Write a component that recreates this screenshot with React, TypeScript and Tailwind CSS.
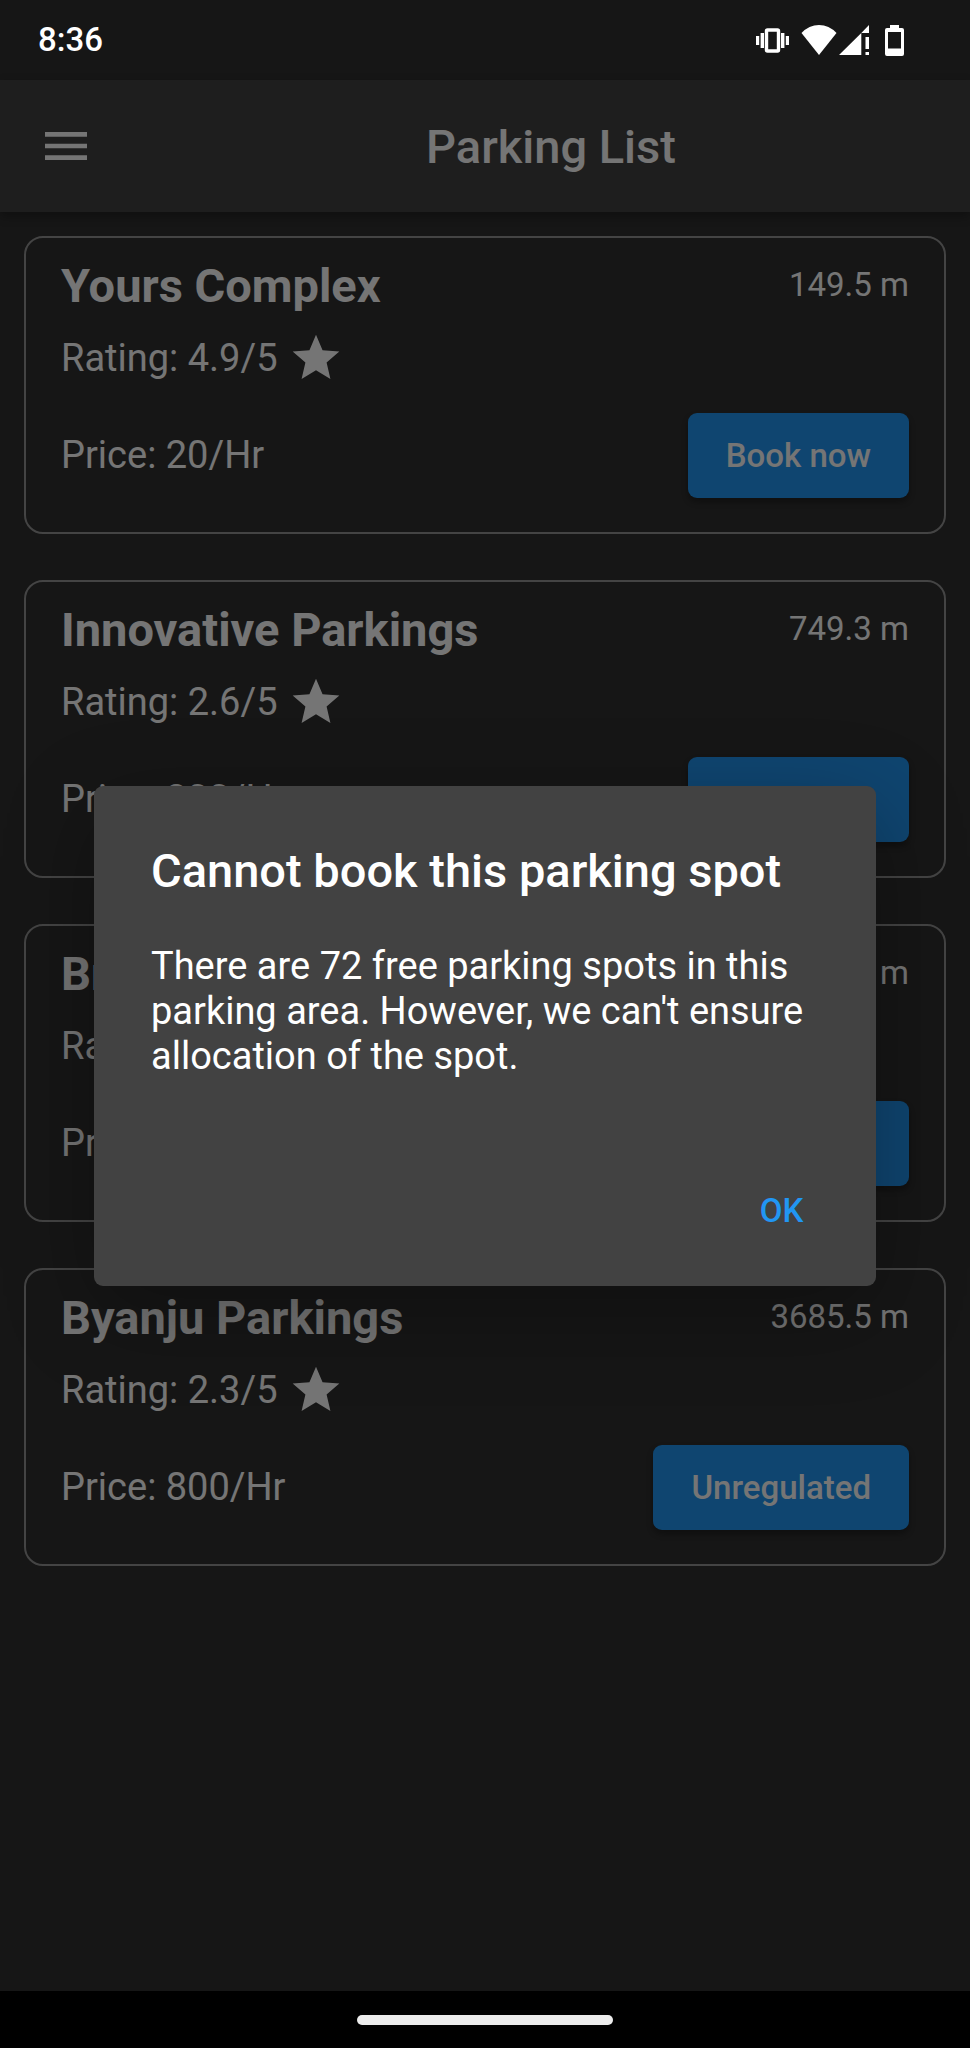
import { useState } from "react";

interface Parking {
    name: string
    distance: string
    rating: string
    price: string
    action: string
}

const parkings: Parking[] = [
    { name: "Yours Complex", distance: "149.5 m", rating: "4.9/5", price: "20/Hr", action: "Book now" },
    { name: "Innovative Parkings", distance: "749.3 m", rating: "2.6/5", price: "200/Hr", action: "Book now" },
    { name: "Britain Parkings", distance: "970.1 m", rating: "3.4/5", price: "100/Hr", action: "Book now" },
    { name: "Byanju Parkings", distance: "3685.5 m", rating: "2.3/5", price: "800/Hr", action: "Unregulated" },
];

function VibrateIcon() {
    return (
        <svg width="33" height="25" viewBox="0 0 33 25" fill="currentColor" aria-hidden="true">
            <rect x="0" y="8" width="3.2" height="9" />
            <rect x="4.6" y="5" width="3.4" height="15" />
            <rect x="10.5" y="2" width="12" height="21" rx="1" fill="none" stroke="currentColor" strokeWidth="3.4" />
            <rect x="25" y="5" width="3.4" height="15" />
            <rect x="29.8" y="8" width="3.2" height="9" />
        </svg>
    )
}

function WifiIcon() {
    return (
        <svg width="36" height="30" viewBox="0 0 36 30" fill="currentColor" aria-hidden="true">
            <path d="M18 30L0.5 8Q8 0 18 0T35.5 8Z" />
        </svg>
    )
}

function SignalIcon() {
    return (
        <svg width="30" height="30" viewBox="0 0 30 30" fill="currentColor" aria-hidden="true">
            <path d="M0 30L22.3 8V30ZM22.3 8L30 0V8Z" />
            <rect x="26.5" y="12" width="3.5" height="12" />
            <rect x="26.5" y="27" width="3.5" height="3" />
        </svg>
    )
}

function BatteryIcon() {
    return (
        <svg width="19" height="31" viewBox="0 0 19 31" fill="currentColor" aria-hidden="true">
            <path fillRule="evenodd" d="M5 0H14V3H17Q19 3 19 5V29Q19 31 17 31H2Q0 31 0 29V5Q0 3 2 3H5ZM3 7V23.5H16V7Z" />
        </svg>
    )
}

function MenuIcon() {
    return (
        <svg className="size-14" viewBox="0 0 24 24" fill="currentColor" aria-hidden="true">
            <path d="M3 18h18v-2H3v2zm0-5h18v-2H3v2zm0-7v2h18V6H3z" />
        </svg>
    )
}

function StarIcon() {
    return (
        <svg className="size-14" viewBox="0 0 24 24" fill="currentColor" aria-hidden="true">
            <path d="M12 17.27L18.18 21l-1.64-7.03L22 9.24l-7.19-.61L12 2 9.19 8.63 2 9.24l5.46 4.73L5.82 21z" />
        </svg>
    )
}

function StatusBar() {
    return (
        <div className="flex h-20 items-center justify-between bg-[#161616] pl-[38px] pr-[66px]">
            <span className="text-[33px] leading-10 font-medium">8:36</span>
            <div className="flex items-center">
                <VibrateIcon />
                <div className="ml-3 flex items-center gap-0.5">
                    <WifiIcon />
                    <SignalIcon />
                </div>
                <div className="ml-4">
                    <BatteryIcon />
                </div>
            </div>
        </div>
    )
}

function ParkingCard({ parking, onBook }: { parking: Parking, onBook: () => void }) {
    return (
        <li className="rounded-[19px] border-2 border-[#949494] px-[35px] pt-5 pb-[34px]">
            <div className="flex items-start justify-between">
                <h2 className="text-[47px] leading-14 font-bold">{parking.name}</h2>
                <span className="text-[33px] leading-[54px]">{parking.distance}</span>
            </div>
            <div className="mt-4 flex items-center gap-2.5 text-[38px] leading-[45px]">
                <span>Rating: {parking.rating}</span>
                <StarIcon />
            </div>
            <div className="mt-[27px] flex items-center justify-between text-[38px] leading-[45px]">
                <span>Price: {parking.price}</span>
                <button
                    onClick={onBook}
                    className="h-[85px] rounded-[9px] bg-[#2196f3] px-[38px] text-[33px] font-medium shadow-[0_4px_6px_rgba(0,0,0,0.3)]"
                >
                    {parking.action}
                </button>
            </div>
        </li>
    )
}

export default function App() {
    const [isOpen, setIsOpen] = useState(true);

    return (
        <div className="flex min-h-screen flex-col bg-[#303030] font-['Roboto',sans-serif] text-white">
            <StatusBar />

            <div className="relative flex flex-1 flex-col">
                <header className="flex h-[132px] items-center bg-[#424242] shadow-[0_4px_10px_rgba(0,0,0,0.3)]">
                    <button className="flex w-[132px] justify-center" aria-label="Open menu">
                        <MenuIcon />
                    </button>
                    <h1 className="flex-1 pt-0.5 text-center text-[47px] leading-14 font-medium">Parking List</h1>
                </header>

                <main className="flex-1 px-6 py-6">
                    <ul className="flex flex-col gap-[46px]">
                        {parkings.map((parking) => (
                            <ParkingCard key={parking.name} parking={parking} onBook={() => setIsOpen(true)} />
                        ))}
                    </ul>
                </main>

                {isOpen && (
                    <div className="absolute inset-0 flex items-center justify-center bg-black/54 px-[94px]">
                        <div
                            role="dialog"
                            aria-modal="true"
                            aria-labelledby="dialog-title"
                            className="flex w-full flex-col rounded-[9px] bg-[#424242] pt-[57px] pb-8 shadow-[0_26px_90px_rgba(0,0,0,0.3)]"
                        >
                            <h2 id="dialog-title" className="px-[57px] text-[47px] leading-14 font-medium">
                                Cannot book this parking spot
                            </h2>
                            <p className="mt-[45px] px-[57px] text-[38px] leading-[45px]">
                                There are 72 free parking spots in this parking area. However, we can't ensure allocation of the spot.
                            </p>
                            <button
                                onClick={() => setIsOpen(false)}
                                className="mt-[90px] mr-[19px] h-[85px] w-[151px] self-end text-[33px] font-medium text-[#2196f3]"
                            >
                                OK
                            </button>
                        </div>
                    </div>
                )}
            </div>

            <div className="flex h-[57px] items-center justify-center bg-black">
                <div className="h-2.5 w-64 rounded-full bg-[#ececec]" />
            </div>
        </div>
    )
}
